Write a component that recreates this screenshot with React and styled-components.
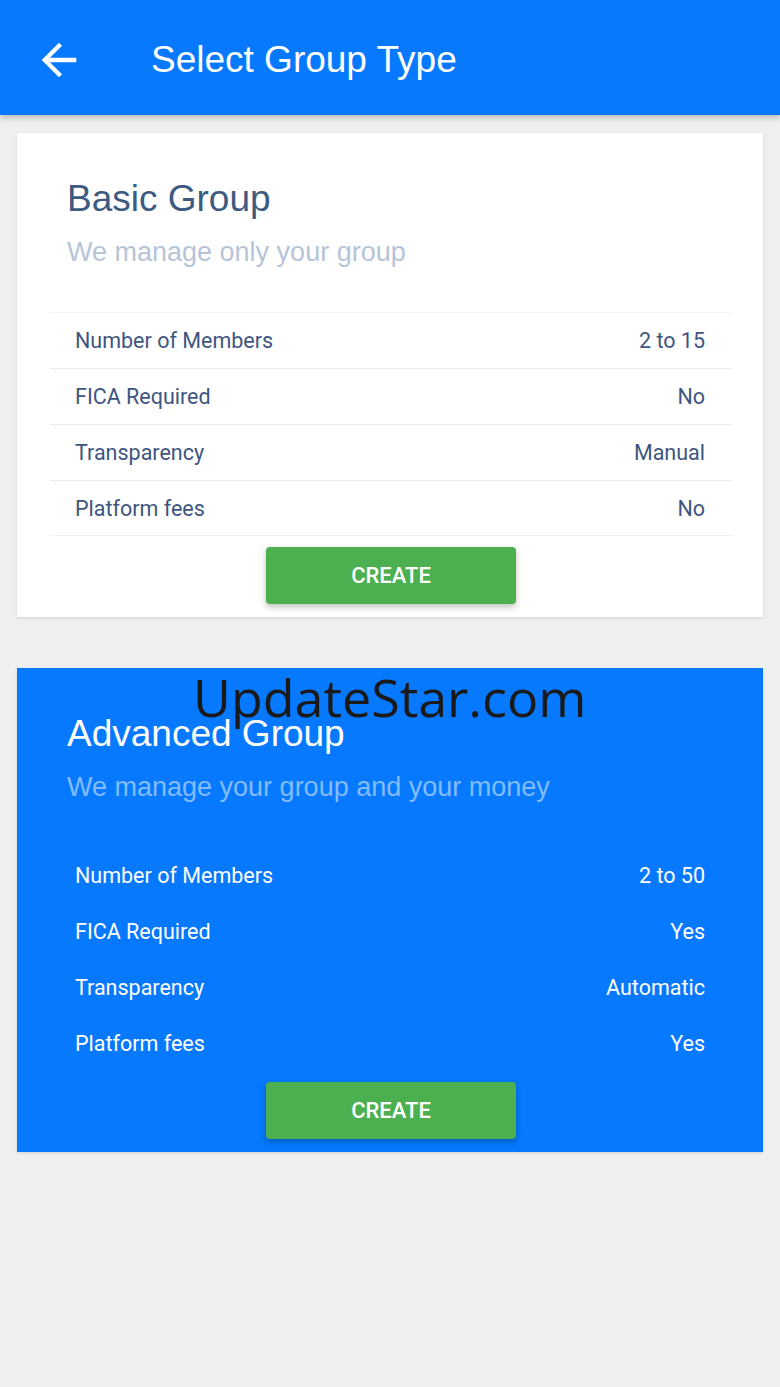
import React from 'react'
import styled, { createGlobalStyle } from 'styled-components'

const GlobalStyle = createGlobalStyle`
  html, body {
    margin: 0;
    padding: 0;
    background: #efefef;
    font-family: "Liberation Sans", Arial, sans-serif;
  }
`

const groups = [
  {
    name: 'Basic Group',
    tagline: 'We manage only your group',
    rows: [
      ['Number of Members', '2 to 15'],
      ['FICA Required', 'No'],
      ['Transparency', 'Manual'],
      ['Platform fees', 'No'],
    ],
  },
  {
    name: 'Advanced Group',
    tagline: 'We manage your group and your money',
    dark: true,
    rows: [
      ['Number of Members', '2 to 50'],
      ['FICA Required', 'Yes'],
      ['Transparency', 'Automatic'],
      ['Platform fees', 'Yes'],
    ],
  },
]

const App = () => {
  return (
    <Page>
      <GlobalStyle />
      <Header>
        <BackButton aria-label='back'>
          <svg width='52' height='52' viewBox='0 0 24 24'>
            <path fill='#fff' d='M20 11H7.83l5.59-5.59L12 4l-8 8 8 8 1.41-1.41L7.83 13H20v-2z' />
          </svg>
        </BackButton>
        <HeaderTitle>Select Group Type</HeaderTitle>
      </Header>

      <List>
        {groups.map((g) => (
          <Card key={g.name} $dark={g.dark}>
            <Intro>
              <GroupName $dark={g.dark}>{g.name}</GroupName>
              <Tagline $dark={g.dark}>{g.tagline}</Tagline>
            </Intro>
            <Table>
              {g.rows.map(([label, value]) => (
                <Row key={label} $dark={g.dark}>
                  <span>{label}</span>
                  <span>{value}</span>
                </Row>
              ))}
            </Table>
            <CreateButton>CREATE</CreateButton>
          </Card>
        ))}
      </List>

      <Watermark>UpdateStar.com</Watermark>
    </Page>
  )
}

export default App

const Page = styled.div`
  position: relative;
  min-height: 1387px;
  background: #efefef;
`

const Header = styled.header`
  height: 115px;
  background: #0679fe;
  display: flex;
  align-items: center;
  padding-left: 33px;
  box-shadow: 0 3px 6px rgba(0,0,0,0.22);
  position: relative;
  z-index: 1;
`

const BackButton = styled.div`
  width: 52px;
  height: 52px;
  display: flex;
  margin-top: 4px;
`

const HeaderTitle = styled.h1`
  margin: 5px 0 0 66px;
  font-size: 37px;
  font-weight: normal;
  color: #fff;
`

const List = styled.div`
  display: flex;
  flex-direction: column;
  gap: 51px;
  padding: 18px 17px;
`

const Card = styled.section`
  background: ${(p) => (p.$dark ? '#0679fe' : '#fff')};
  box-shadow: 0 1px 3px rgba(0,0,0,0.12);
  padding: 0 31px 13px 33px;
  display: flex;
  flex-direction: column;
  align-items: stretch;
`

const Intro = styled.div`
  padding: 44px 0 43px 17px;
`

const GroupName = styled.h2`
  margin: 0;
  font-size: 37px;
  line-height: 44px;
  font-weight: normal;
  color: ${(p) => (p.$dark ? '#fff' : '#3d5a80')};
`

const Tagline = styled.p`
  margin: 14px 0 0;
  font-size: 27px;
  line-height: 34px;
  color: ${(p) => (p.$dark ? '#82bcff' : '#b6c4d8')};
`

const Table = styled.div`
  display: flex;
  flex-direction: column;
`

const Row = styled.div`
  box-sizing: border-box;
  height: 56px;
  display: flex;
  align-items: center;
  justify-content: space-between;
  padding: 0 27px 0 25px;
  font-family: Roboto, "Liberation Sans", sans-serif;
  font-size: 21.5px;
  color: ${(p) => (p.$dark ? '#fff' : '#3e5580')};
  border-top: 1px solid ${(p) => (p.$dark ? 'transparent' : '#f4f4f4')};
  &:last-child {
    border-bottom: 1px solid ${(p) => (p.$dark ? 'transparent' : '#f1f1f1')};
  }
  &:not(:first-child) {
    border-top-color: ${(p) => (p.$dark ? 'transparent' : '#ececec')};
  }
`

const CreateButton = styled.button`
  align-self: center;
  margin-top: 11px;
  width: 250px;
  height: 57px;
  border: none;
  border-radius: 4px;
  background: #4caf50;
  color: #fff;
  font-family: Roboto, "Liberation Sans", sans-serif;
  font-size: 22px;
  font-weight: 500;
  box-shadow: 0 3px 6px rgba(0,0,0,0.25);
`

const Watermark = styled.div`
  position: absolute;
  left: 193px;
  top: 661px;
  font-family: "Open Sans", "Noto Sans", sans-serif;
  font-size: 52px;
  color: #1a1a1a;
  pointer-events: none;
  z-index: 2;
`
